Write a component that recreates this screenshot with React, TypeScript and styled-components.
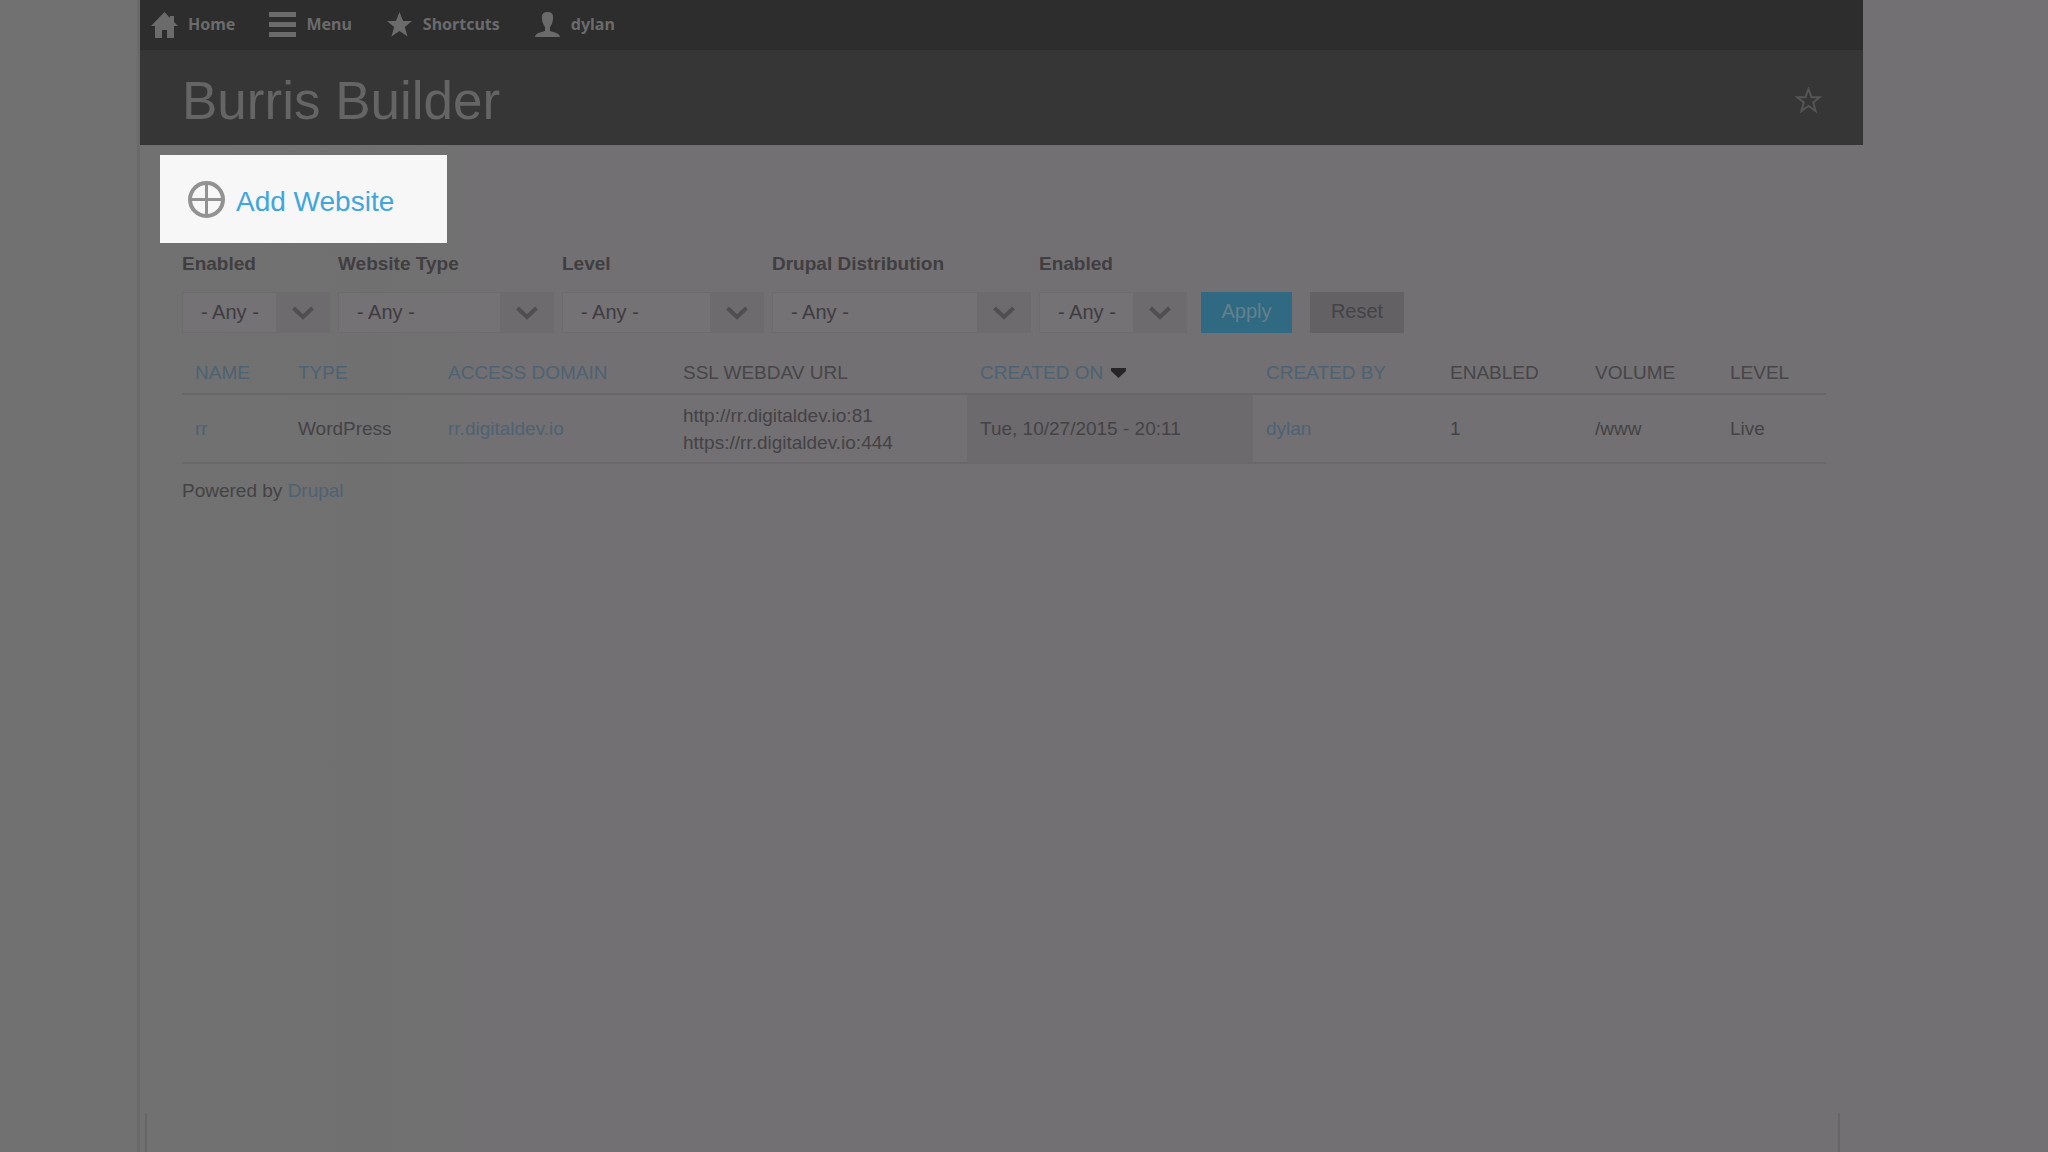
import React from "react";
import styled, { createGlobalStyle } from "styled-components";

const GlobalStyle = createGlobalStyle`
  *, *::before, *::after { box-sizing: border-box; }
  body {
    margin: 0;
    background: linear-gradient(90deg, #707170 0, #707170 160px, #727072 480px);
    color: #444245;
    font-family: "Liberation Sans", Arial, sans-serif;
    font-size: 19px;
    line-height: 27px;
  }
`;

const Shell = styled.div`
  display: flex;
  flex-direction: column;
  min-height: 100vh;
  margin: 0 185px 0 137px;
  border-left: 3px solid #6a6a6a;
`;

const TopBar = styled.nav`
  display: flex;
  align-items: center;
  gap: 34px;
  height: 50px;
  padding: 0 11px 2px;
  background: #2d2d2d;
`;

const TopLink = styled.a`
  display: flex;
  align-items: center;
  gap: 10px;
  color: #6b6b6b;
  font-family: "Noto Sans", sans-serif;
  font-size: 16px;
  font-weight: 700;
  text-decoration: none;
`;

const Glyph = styled.svg`
  width: 27px;
  height: 27px;
  fill: currentColor;
`;

const Header = styled.header`
  display: flex;
  align-items: center;
  justify-content: space-between;
  height: 95px;
  padding: 6px 41px 0 42px;
  background: #363636;
`;

const Title = styled.h1`
  margin: 0;
  color: #656565;
  font-size: 53px;
  font-weight: 400;
  line-height: 60px;
`;

const StarButton = styled.button`
  display: flex;
  padding: 0;
  border: 0;
  background: none;
  color: #555555;
  cursor: pointer;
`;

const Main = styled.main`
  padding: 10px 37px 0 42px;
`;

const AddLink = styled.a`
  display: flex;
  align-items: center;
  gap: 11px;
  width: 287px;
  height: 88px;
  margin-left: -22px;
  padding-left: 28px;
  background: #f7f7f7;
  color: #41a6dc;
  font-size: 29px;
  text-decoration: none;
`;

const AddText = styled.span`
  padding-top: 4px;
  font-size: 28px;
`;

const Filters = styled.form`
  display: flex;
  align-items: flex-end;
  gap: 8px;
  padding-top: 7px;
`;

const Field = styled.div<{ $width: number }>`
  display: flex;
  flex-direction: column;
  gap: 15px;
  width: ${(p) => p.$width}px;
`;

const FieldLabel = styled.label`
  color: #403e41;
  font-weight: 700;
  white-space: nowrap;
`;

const SelectBox = styled.div`
  display: grid;
  grid-template-columns: 1fr 53px;
  align-items: center;
  height: 41px;
  border: 1px solid #6d6b6e;
  background: linear-gradient(#6d6b6e, #6d6b6e) right / 53px 100% no-repeat #747275;
`;

const Select = styled.select`
  grid-area: 1 / 1 / 2 / 3;
  width: 100%;
  height: 39px;
  padding: 0 53px 0 18px;
  border: 0;
  background: transparent;
  color: #3e3c3f;
  font: inherit;
  font-size: 20px;
  appearance: none;
`;

const Chevron = styled.svg`
  grid-area: 1 / 2;
  justify-self: center;
  width: 22px;
  height: 14px;
  fill: none;
  stroke: #504e51;
  stroke-width: 4;
  pointer-events: none;
`;

const Actions = styled.div`
  display: flex;
  gap: 18px;
  padding-left: 6px;
`;

const Button = styled.button<{ $primary?: boolean }>`
  width: ${(p) => (p.$primary ? 91 : 94)}px;
  height: 41px;
  padding: 0 0 2px;
  border: 0;
  border-radius: 1px;
  background: ${(p) => (p.$primary ? "#2f6a82" : "#636164")};
  color: ${(p) => (p.$primary ? "#64808c" : "#454346")};
  font: inherit;
  font-size: 20px;
  cursor: pointer;
`;

const Table = styled.table`
  width: 100%;
  margin-top: 18px;
  border-collapse: collapse;
  table-layout: fixed;
`;

const HeadCell = styled.th`
  height: 43px;
  padding: 0 0 0 13px;
  border-bottom: 2px solid #686669;
  color: #474548;
  font-weight: 400;
  text-align: left;
  text-transform: uppercase;
  white-space: nowrap;
`;

const Cell = styled.td<{ $sorted?: boolean }>`
  height: 69px;
  padding: 0 0 0 13px;
  border-bottom: 2px solid #6a686a;
  background: ${(p) => (p.$sorted ? "#6c6a6d" : "transparent")};
  white-space: nowrap;
`;

const Link = styled.a`
  color: #4d6272;
  text-decoration: none;
`;

const SortArrow = styled.svg`
  width: 15px;
  height: 10px;
  margin-left: 8px;
  vertical-align: 1px;
  fill: #262528;
`;

const Powered = styled.p`
  margin: 0;
  padding-top: 13px;
`;

const FrameEnd = styled.div`
  height: 39px;
  margin: auto 23px 0 5px;
  border: solid #666567;
  border-width: 0 2px;
`;

const filters = [
  { id: "enabled", label: "Enabled", width: 148 },
  { id: "type", label: "Website Type", width: 216 },
  { id: "level", label: "Level", width: 202 },
  { id: "distribution", label: "Drupal Distribution", width: 259 },
  { id: "active", label: "Enabled", width: 148 },
];

const columns = [
  { label: "Name", width: 103, link: true },
  { label: "Type", width: 150, link: true },
  { label: "Access Domain", width: 235, link: true },
  { label: "SSL WebDAV URL", width: 297 },
  { label: "Created On", width: 286, link: true, sorted: true },
  { label: "Created By", width: 184, link: true },
  { label: "Enabled", width: 145 },
  { label: "Volume", width: 135 },
  { label: "Level", width: 109 },
];

const STAR = "M13.5 1l3.6 9H26l-7.2 6 2.8 9.500-8.100-5.500-8.100 5.500L8.200 16 1 10h8.900z";

const topLinks = [
  { label: "Home", path: "M13.500 1L0 15h4v12h7v-8h5v8h7V15h4l-4-4V5h-4v2z" },
  { label: "Menu", path: "M0 1h27v5H0zM0 11h27v5H0zM0 21h27v5H0z" },
  { label: "Shortcuts", path: STAR },
  {
    label: "dylan",
    path: "M13.500 1C9 1 7.500 3.500 8 8c.3 3.500 1.500 6 3 8v4C6.500 21.500 1.500 22 1 26h25c-.5-4-5.500-4.500-10-6v-4c1.500-2 2.700-4.500 3-8C19.500 3.500 18 1 13.500 1z",
  },
];

export default function App() {
  return (
    <>
      <GlobalStyle />
      <Shell>
        <TopBar aria-label="Administration">
          {topLinks.map((item) => (
            <TopLink href="#" key={item.label}>
              <Glyph viewBox="0 0 27 27" aria-hidden="true">
                <path d={item.path} />
              </Glyph>
              {item.label}
            </TopLink>
          ))}
        </TopBar>
        <Header>
          <Title>Burris Builder</Title>
          <StarButton type="button" aria-label="Add to shortcuts">
            <svg width="27" height="27" viewBox="0 0 27 27" fill="none" stroke="currentColor" strokeWidth="2">
              <path d="M13.500 2l3 8.200h8.300l-6.600 5.200 2.400 8.600-7.100-5-7.100 5 2.400-8.600L2.200 10.200h8.300z" />
            </svg>
          </StarButton>
        </Header>
        <Main>
          <AddLink href="#">
            <svg width="37" height="37" viewBox="0 0 37 37" fill="none" stroke="#929292" strokeWidth="3" aria-hidden="true">
              <circle cx="18.500" cy="18.500" r="16.500" strokeWidth="4" />
              <path d="M18.500 2v33M2 18.500h33" />
            </svg>
            <AddText>Add Website</AddText>
          </AddLink>
          <Filters onSubmit={(e) => e.preventDefault()}>
            {filters.map((f) => (
              <Field $width={f.width} key={f.id}>
                <FieldLabel htmlFor={f.id}>{f.label}</FieldLabel>
                <SelectBox>
                  <Select id={f.id}>
                    <option>- Any -</option>
                  </Select>
                  <Chevron viewBox="0 0 22 14" aria-hidden="true">
                    <path d="M1.500 2l9.500 9 9.500-9" />
                  </Chevron>
                </SelectBox>
              </Field>
            ))}
            <Actions>
              <Button type="submit" $primary>
                Apply
              </Button>
              <Button type="reset">Reset</Button>
            </Actions>
          </Filters>
          <Table>
            <colgroup>
              {columns.map((c, i) => (
                <col key={i} style={{ width: c.width }} />
              ))}
            </colgroup>
            <thead>
              <tr>
                {columns.map((c, i) => (
                  <HeadCell key={i} scope="col">
                    {c.link ? <Link href="#">{c.label}</Link> : c.label}
                    {c.sorted && (
                      <SortArrow viewBox="0 0 15 10" aria-hidden="true">
                        <path d="M0 0h15v3L7.500 10 0 3z" />
                      </SortArrow>
                    )}
                  </HeadCell>
                ))}
              </tr>
            </thead>
            <tbody>
              <tr>
                <Cell><Link href="#">rr</Link></Cell>
                <Cell>WordPress</Cell>
                <Cell><Link href="#">rr.digitaldev.io</Link></Cell>
                <Cell>
                  http://rr.digitaldev.io:81
                  <br />
                  https://rr.digitaldev.io:444
                </Cell>
                <Cell $sorted>Tue, 10/27/2015 - 20:11</Cell>
                <Cell><Link href="#">dylan</Link></Cell>
                <Cell>1</Cell>
                <Cell>/www</Cell>
                <Cell>Live</Cell>
              </tr>
            </tbody>
          </Table>
          <Powered>
            Powered by <Link href="#">Drupal</Link>
          </Powered>
        </Main>
        <FrameEnd />
      </Shell>
    </>
  );
}
